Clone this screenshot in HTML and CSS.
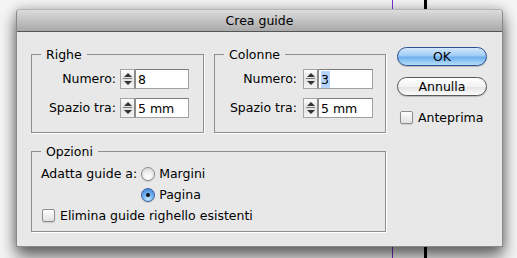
FILE: index.html
```html
<!DOCTYPE html>
<html lang="it">
  <head>
    <meta charset="UTF-8" />
    <title>Crea guide</title>
    <link rel="stylesheet" href="styles.css">
  </head>
  <body>
    <div class="guide guide-purple"></div>
    <div class="guide guide-black"></div>

    <div class="dialog">
      <div class="titlebar">Crea guide</div>
      <div class="dialog-body">
        <div class="main">
          <div class="top-groups">
            <fieldset class="group group-righe">
              <legend>Righe</legend>
              <div class="field-grid">
                <label>Numero:</label>
                <span class="spinner"><span class="up"></span><span class="down"></span></span>
                <span class="input">8</span>
                <label>Spazio tra:</label>
                <span class="spinner"><span class="up"></span><span class="down"></span></span>
                <span class="input">5 mm</span>
              </div>
            </fieldset>
            <fieldset class="group group-colonne">
              <legend>Colonne</legend>
              <div class="field-grid">
                <label>Numero:</label>
                <span class="spinner"><span class="up"></span><span class="down"></span></span>
                <span class="input"><span class="selected">3</span></span>
                <label>Spazio tra:</label>
                <span class="spinner"><span class="up"></span><span class="down"></span></span>
                <span class="input">5 mm</span>
              </div>
            </fieldset>
          </div>
          <fieldset class="group group-opzioni">
            <legend>Opzioni</legend>
            <div class="radio-row">
              <span class="radio-label">Adatta guide a:</span>
              <div class="radio-list">
                <div class="option"><span class="radio"></span>Margini</div>
                <div class="option"><span class="radio checked"></span>Pagina</div>
              </div>
            </div>
            <div class="option"><span class="checkbox"></span>Elimina guide righello esistenti</div>
          </fieldset>
        </div>
        <div class="buttons">
          <button class="btn btn-default">OK</button>
          <button class="btn">Annulla</button>
          <div class="option preview"><span class="checkbox"></span>Anteprima</div>
        </div>
      </div>
    </div>
  </body>
</html>
```

FILE: styles.css
```css
body {
  margin: 0;
  width: 517px;
  height: 258px;
  overflow: hidden;
  position: relative;
  background: #f4f4f4;
  font-family: "DejaVu Sans", sans-serif;
  font-size: 12.5px;
  color: #000;
}

/* page guides behind the dialog */
.guide {
  position: absolute;
  top: 0;
  bottom: 0;
}
.guide-purple {
  left: 392px;
  width: 1px;
  background: #7b2fd6;
}
.guide-black {
  left: 424px;
  width: 3px;
  background: #000;
}

.dialog {
  position: relative;
  margin: 9px 0 0 16px;
  width: 487px;
  height: 238px;
  box-sizing: border-box;
  border: 1px solid #8a8a8a;
  border-top-color: #b5b5b5;
  border-radius: 4px 4px 0 0;
  background: #e8e8e8;
  box-shadow: 0 10px 16px rgba(0, 0, 0, 0.55), 0 0 12px rgba(0, 0, 0, 0.25);
}

.titlebar {
  height: 21px;
  line-height: 21px;
  text-align: center;
  border-bottom: 1px solid #555;
  border-radius: 3px 3px 0 0;
  background: linear-gradient(to bottom, #dcdcdc, #a9a9a9);
}

.dialog-body {
  display: flex;
  gap: 11px;
  padding: 15px 14px 0 14px;
}

.main {
  display: flex;
  flex-direction: column;
  gap: 11px;
  width: 355px;
}
.top-groups {
  display: flex;
  gap: 10px;
}

.group {
  margin: 0;
  box-sizing: border-box;
  border: 1px solid #8e8e8e;
  box-shadow: 1px 1px 0 #fff;
  padding: 0 0 0 9px;
}
.group legend {
  padding: 0 5px;
  line-height: 15px;
}
.group-righe {
  width: 173px;
  height: 86px;
  padding-right: 14px;
}
.group-colonne {
  width: 172px;
  height: 86px;
  padding-right: 12px;
}
.group-opzioni {
  width: 355px;
  height: 88px;
}

.field-grid {
  display: grid;
  grid-template-columns: 1fr 16px 53px;
  row-gap: 9px;
  padding-top: 7px;
  margin-left: -5px;
}
.field-grid label {
  text-align: right;
  line-height: 20px;
  margin-right: 4px;
  white-space: nowrap;
}
.group-colonne .field-grid {
  grid-template-columns: 1fr 16px 54px;
}
.group-colonne .field-grid label {
  margin-right: 6px;
}

.spinner {
  position: relative;
  height: 20px;
  box-sizing: border-box;
  border: 1px solid #a5a5a5;
  border-right: 2px solid #8c8c8c;
  background: linear-gradient(to bottom, #fdfdfd, #e2e2e2 50%, #f4f4f4);
}
.spinner::after {
  content: "";
  position: absolute;
  left: 2px;
  right: 2px;
  top: 8px;
  height: 1px;
  background: #7a7a7a;
}
.spinner .up,
.spinner .down {
  position: absolute;
  left: 3px;
  width: 0;
  height: 0;
  border-left: 4px solid transparent;
  border-right: 4px solid transparent;
}
.spinner .up {
  top: 3px;
  border-bottom: 4px solid #333;
}
.spinner .down {
  top: 11px;
  border-top: 4px solid #333;
}

.input {
  height: 20px;
  line-height: 19px;
  box-sizing: border-box;
  border: 1px solid #a0a0a0;
  border-top-color: #7c7c7c;
  border-left: none;
  background: #fff;
  padding-left: 2px;
}
.selected {
  background: #b5d5ff;
  padding: 1px 1px 1px 0;
}

.radio-row {
  display: flex;
  gap: 4px;
  padding-top: 4px;
}
.radio-label {
  line-height: 21px;
}
.radio-list {
  display: flex;
  flex-direction: column;
}
.option {
  display: flex;
  align-items: center;
  height: 21px;
  gap: 4px;
}

.radio {
  width: 14px;
  height: 14px;
  box-sizing: border-box;
  border-radius: 50%;
  border: 1px solid #8a8a8a;
  background: radial-gradient(circle at 50% 80%, #ffffff, #f2f2f2 40%, #d2d2d2);
  box-shadow: 0 1px 1px rgba(0, 0, 0, 0.15);
}
.radio.checked {
  position: relative;
  border-color: #3b5fa0;
  background: radial-gradient(circle at 50% 85%, #c8e6ff, #6fb1ef 45%, #3e84d9);
}
.radio.checked::after {
  content: "";
  position: absolute;
  left: 4px;
  top: 4px;
  width: 4px;
  height: 4px;
  border-radius: 50%;
  background: #111;
}

.checkbox {
  width: 13px;
  height: 13px;
  box-sizing: border-box;
  border: 1px solid #8c8c8c;
  border-radius: 2px;
  background: linear-gradient(to bottom, #ffffff, #f0f0f0 50%, #e0e0e0);
  box-shadow: 0 1px 1px rgba(0, 0, 0, 0.12);
}
.group-opzioni > .option {
  margin-left: 1px;
  gap: 5px;
}

.buttons {
  display: flex;
  flex-direction: column;
  width: 90px;
}
.btn {
  font-family: inherit;
  font-size: 12.5px;
  width: 90px;
  height: 19px;
  padding: 0;
  border-radius: 10px;
  border: 1px solid #5a5a5a;
  background: linear-gradient(to bottom, #ffffff, #f2f2f2 50%, #e3e3e3 51%, #fbfbfb);
  box-shadow: 0 1px 1px rgba(0, 0, 0, 0.2);
  color: #000;
}
.btn + .btn {
  margin-top: 11px;
}
.btn-default {
  border-color: #2c4f93;
  background: linear-gradient(to bottom, #d4e8fb, #9ccaf5 48%, #6aaeee 52%, #b6def9);
}
.preview {
  margin-top: 11px;
  margin-left: 3px;
  gap: 5px;
}
```
